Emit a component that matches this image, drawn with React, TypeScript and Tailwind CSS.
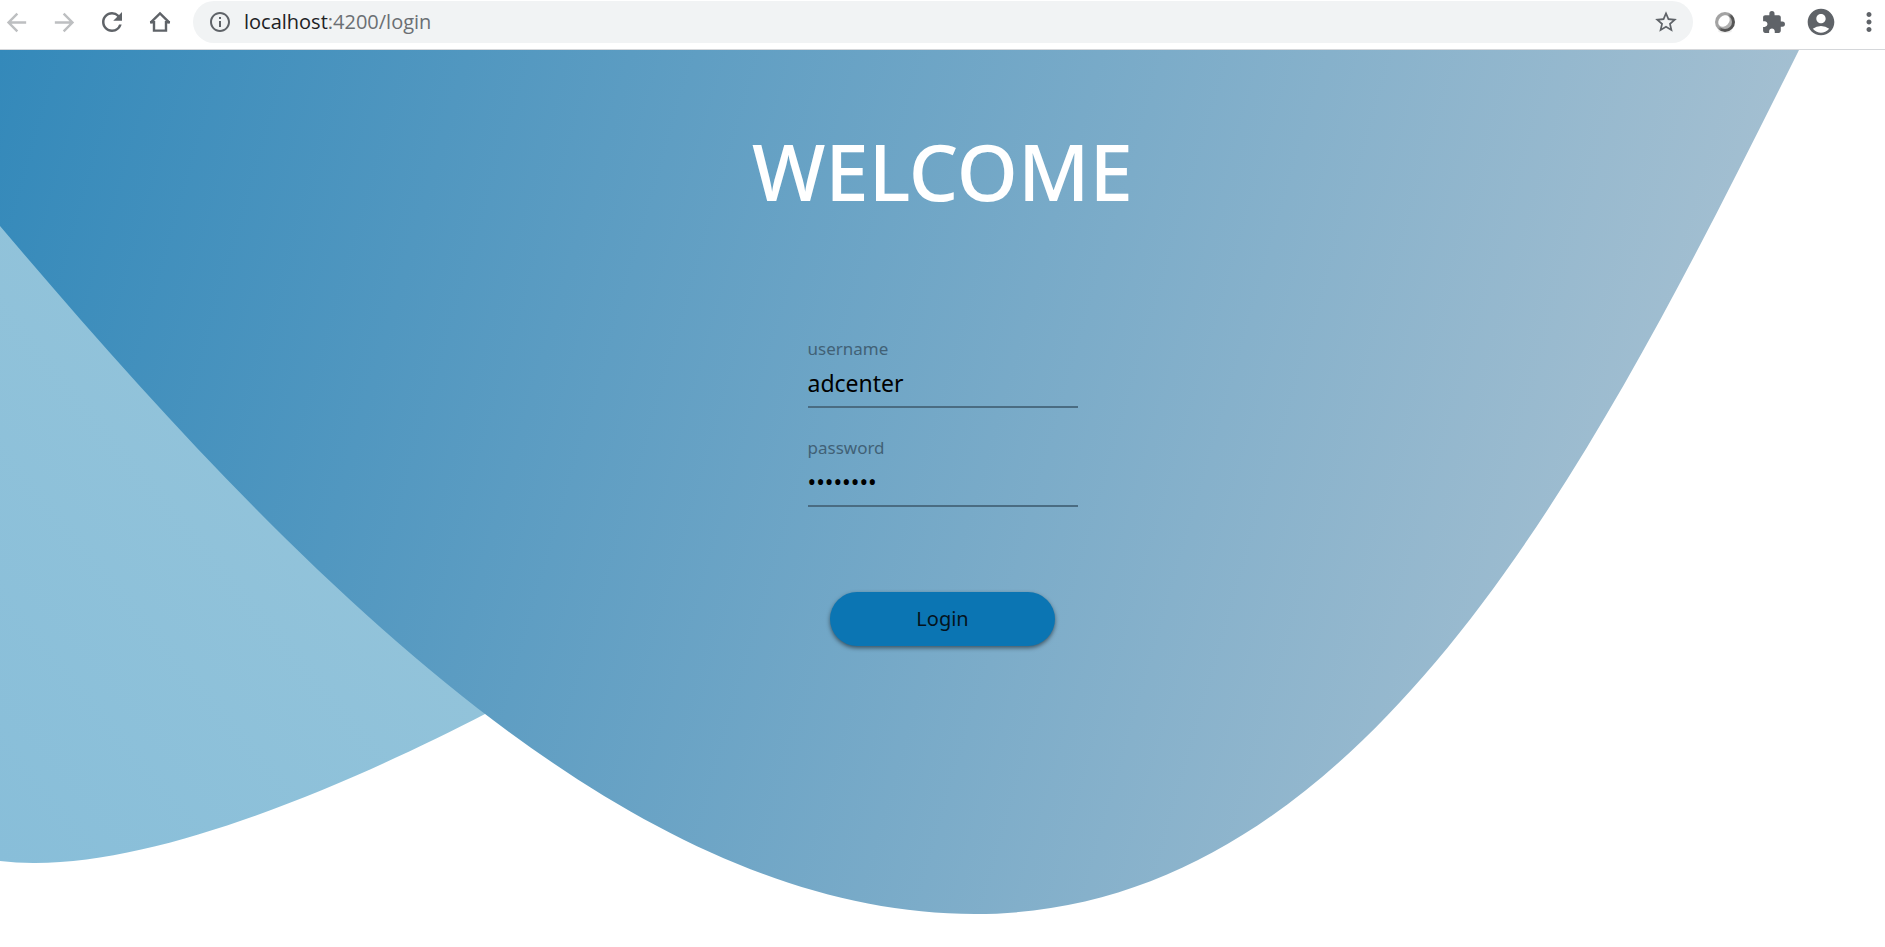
import { ReactNode } from "react";
import {
  MdArrowBack,
  MdArrowForward,
  MdExtension,
  MdInfoOutline,
  MdMoreVert,
  MdRefresh,
  MdStarBorder,
  MdAccountCircle,
} from "react-icons/md";

function IconButton({
  label,
  faded = false,
  children,
}: {
  label: string;
  faded?: boolean;
  children: ReactNode;
}) {
  return (
    <button
      type="button"
      aria-label={label}
      className={
        faded
          ? "flex size-8 items-center justify-center text-[#bdbfc1]"
          : "flex size-8 items-center justify-center text-[#5f6368]"
      }
    >
      {children}
    </button>
  );
}

function HomeIcon() {
  return (
    <svg viewBox="0 0 22 22" className="size-[22px]" fill="none" stroke="currentColor" strokeWidth="2.4" aria-hidden="true">
      <path d="M1.6 11.6 11 2.4l9.4 9.2" />
      <path d="M1 11.2H5V19.6H17V11.2H21" />
    </svg>
  );
}

function SphereIcon() {
  return (
    <svg viewBox="0 0 22 22" className="size-[22px]" aria-hidden="true">
      <defs>
        <linearGradient id="rim" x1="0.1" y1="0.2" x2="0.9" y2="0.8">
          <stop offset="0.4" stopColor="#a3a3a3" />
          <stop offset="0.6" stopColor="#555" />
        </linearGradient>
      </defs>
      <ellipse cx="11" cy="20" rx="7" ry="2" fill="#eee" />
      <circle cx="11" cy="11" r="10" fill="url(#rim)" />
      <circle cx="11" cy="11" r="7" fill="#b0b0b0" />
      <ellipse cx="10" cy="10" rx="6.4" ry="5" transform="rotate(-45 10 10)" fill="#fff" />
    </svg>
  );
}

function BrowserBar() {
  return (
    <header className="flex h-[50px] items-start border-b border-[#d5d7da] bg-white pt-px">
      <nav aria-label="Browser" className="flex h-[42px] items-center gap-4">
        <IconButton label="Back" faded>
          <MdArrowBack size={29} />
        </IconButton>
        <IconButton label="Forward" faded>
          <MdArrowForward size={29} />
        </IconButton>
        <IconButton label="Reload">
          <MdRefresh size={30} />
        </IconButton>
        <IconButton label="Home">
          <HomeIcon />
        </IconButton>
      </nav>
      <div className="ml-[17px] flex h-[42px] flex-1 items-center rounded-full bg-[#f1f3f4] pr-[11px] pl-[15px]">
        <MdInfoOutline size={24} className="shrink-0 text-[#5f6368]" />
        <p className="flex-1 pl-3 font-['Open_Sans','Noto_Sans',sans-serif] text-[20px] leading-6 text-[#6b6f73]">
          <span className="text-[#202124]">localhost</span>:4200/login
        </p>
        <IconButton label="Bookmark this page">
          <MdStarBorder size={26} />
        </IconButton>
      </div>
      <div className="flex h-[42px] items-center gap-4 pl-4">
        <IconButton label="Sphere extension">
          <SphereIcon />
        </IconButton>
        <IconButton label="Extensions">
          <MdExtension size={25} />
        </IconButton>
        <IconButton label="Account">
          <MdAccountCircle size={34} />
        </IconButton>
        <IconButton label="Menu">
          <MdMoreVert size={30} />
        </IconButton>
      </div>
    </header>
  );
}

function Backdrop() {
  return (
    <svg
      viewBox="0 50 1885 897"
      preserveAspectRatio="none"
      className="absolute inset-0 size-full"
      aria-hidden="true"
    >
      <defs>
        <linearGradient id="deep" gradientUnits="userSpaceOnUse" x1="0" y1="50" x2="1662" y2="530">
          <stop offset="0" stopColor="#3489ba" />
          <stop offset="1" stopColor="#a3bfd1" />
        </linearGradient>
        <linearGradient id="pale" gradientUnits="userSpaceOnUse" x1="0" y1="863" x2="355" y2="563">
          <stop offset="0" stopColor="#88bed9" />
          <stop offset="1" stopColor="#92c3da" />
        </linearGradient>
      </defs>
      <path d="M0 200V861Q16 863 33 863C170 864 365 776 485 714L520 600Z" fill="url(#pale)" />
      <path d="M0 50V226C300 580 630 914 975 914C1370 914 1599 450 1799 50Z" fill="url(#deep)" />
    </svg>
  );
}

function Field({ id, label, type, value }: { id: string; label: string; type: string; value: string }) {
  return (
    <div className="flex flex-col border-b-2 border-[#4a6c82] pb-[5px]">
      <label htmlFor={id} className="text-[17px] leading-6 text-[#416176]">
        {label}
      </label>
      <input
        id={id}
        type={type}
        defaultValue={value}
        className="mt-1 h-9 w-full bg-transparent text-[23px] leading-9 text-black outline-none"
      />
    </div>
  );
}

export default function App() {
  return (
    <div className="flex min-h-screen flex-col bg-white">
      <BrowserBar />
      <main className="relative flex flex-1 flex-col">
        <Backdrop />
        <form
          className="relative flex flex-col items-center font-['Noto_Sans',sans-serif]"
          onSubmit={(event) => event.preventDefault()}
        >
          <h1 className="mt-[67px] text-[78px] leading-[108px] font-medium text-white">WELCOME</h1>
          <div className="mt-28 flex w-[270px] flex-col gap-7">
            <Field id="username" label="username" type="text" value="adcenter" />
            <Field id="password" label="password" type="password" value="adcenter" />
          </div>
          <button
            type="submit"
            className="mt-[85px] h-[54px] w-[225px] rounded-full bg-[#0b75b3] text-[20px] text-[#04131d] shadow-[0_2px_4px_rgba(0,0,0,0.5)]"
          >
            Login
          </button>
        </form>
      </main>
    </div>
  );
}
